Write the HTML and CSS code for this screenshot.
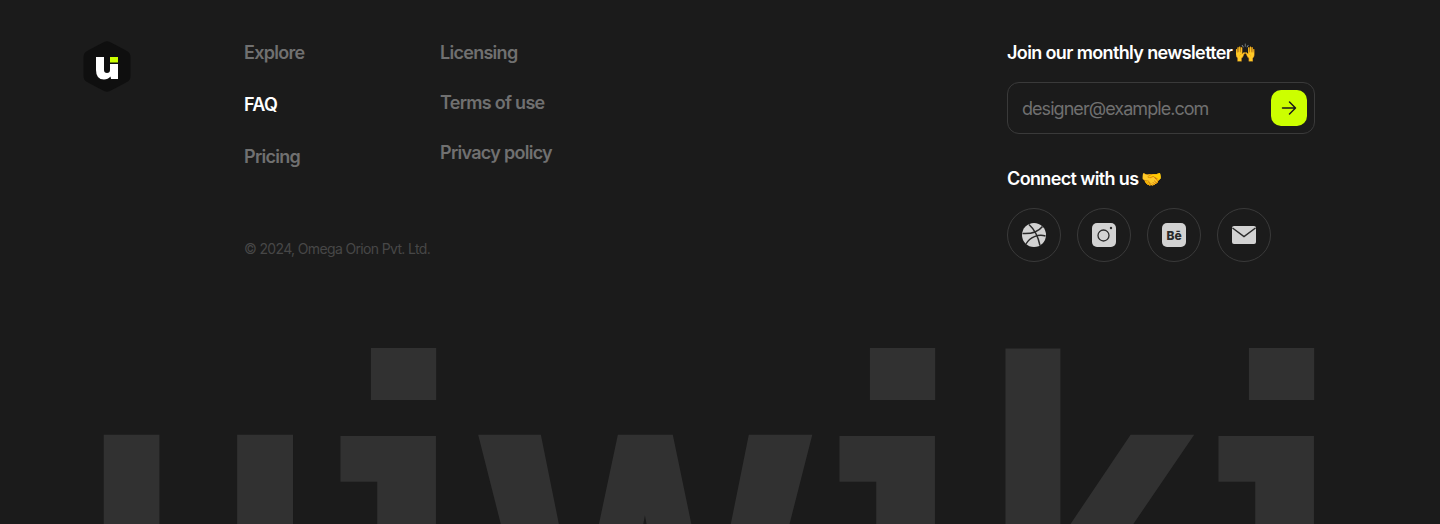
FILE: index.html
```html
<!DOCTYPE html>
<html lang="en">
<head>
<meta charset="utf-8">
<title>uiwiki footer</title>
<link rel="stylesheet" href="styles.css">
</head>
<body>
<footer class="footer">
  <div class="top">
    <a class="logo" href="#" aria-label="uiwiki home">
      <svg width="48" height="53" viewBox="0 0 48 53">
        <path d="M21 2 Q24 0.500 27 2 L44 11 Q47.500 13 47.500 17 L47.500 36 Q47.500 40 44 42 L27 51 Q24 52.500 21 51 L4 42 Q0.500 40 0.500 36 L0.500 17 Q0.500 13 4 11 Z" fill="#0f0f0f"/>
        <path d="M13 17 H21 V30 Q21 33 24 33 Q27 33 27 30 V24 H35 V39 H28 L27.500 36.500 Q25 39.500 21 39.500 Q13 39.500 13 30 Z" fill="#fff"/>
        <rect x="27" y="17" width="8" height="5.500" fill="#ccff00"/>
      </svg>
    </a>
    <div class="nav">
      <div class="links">
        <nav class="col col-a">
          <a href="#">Explore</a>
          <a href="#" class="active">FAQ</a>
          <a href="#">Pricing</a>
        </nav>
        <nav class="col col-b">
          <a href="#">Licensing</a>
          <a href="#">Terms of use</a>
          <a href="#">Privacy policy</a>
        </nav>
      </div>
      <p class="copy">© 2024, Omega Orion Pvt. Ltd.</p>
    </div>
    <div class="side">
      <h3 class="side-title">Join our monthly newsletter <span class="emoji">🙌</span></h3>
      <form class="sub">
        <input class="sub-input" type="email" placeholder="designer@example.com">
        <button class="sub-btn" type="button" aria-label="Subscribe">
          <svg width="16" height="16" viewBox="0 0 16 16" fill="none" stroke="#1a1a1a" stroke-width="1.500" stroke-linecap="round" stroke-linejoin="round"><path d="M1.500 8 H14 M8.500 2 L14.500 8 L8.500 14"/></svg>
        </button>
      </form>
      <h3 class="side-title connect">Connect with us <span class="emoji emoji-small">🤝</span></h3>
      <div class="socials">
        <a class="social" href="#" aria-label="Dribbble">
          <svg width="24" height="24" viewBox="0 0 24 24"><circle cx="12" cy="12" r="12" fill="#d2d2d2"/><g fill="none" stroke="#2a2a2a" stroke-width="1.500"><path d="M7 1.500 C12 6 16 13 18 22.500"/><path d="M0.500 10.500 C8 11 16 9 20.500 3.500"/><path d="M23.500 13 C16 11 8 14 4 21"/></g></svg>
        </a>
        <a class="social" href="#" aria-label="Instagram">
          <svg width="24" height="24" viewBox="0 0 24 24"><rect width="24" height="24" rx="5" fill="#d2d2d2"/><circle cx="11.500" cy="12.500" r="5.500" fill="none" stroke="#2a2a2a" stroke-width="1.300"/><circle cx="19" cy="5" r="1.200" fill="#2a2a2a"/></svg>
        </a>
        <a class="social" href="#" aria-label="Behance">
          <span class="be">Bē</span>
        </a>
        <a class="social" href="#" aria-label="Email">
          <svg width="24" height="18" viewBox="0 0 24 18"><rect width="24" height="18" rx="2" fill="#d2d2d2"/><path d="M0.500 2 L12 10.500 L23.500 2" fill="none" stroke="#2a2a2a" stroke-width="1.500"/></svg>
        </a>
      </div>
    </div>
  </div>
  <div class="mark"><span class="g g-u">u</span><span class="g-i s-a">i</span><span class="g g-w">w</span><span class="g-i s-b">i</span><span class="g g-k">k</span><span class="g-i">i</span></div>
</footer>
</body>
</html>
```
FILE: styles.css
```css
* { box-sizing: border-box; }
html, body { margin: 0; height: 524px; overflow: hidden; background: #1b1b1b; }
body { font-family: Inter, "Noto Sans", sans-serif; color: #fff; }
a { color: inherit; text-decoration: none; }
.footer { height: 524px; overflow: hidden; padding: 40px 125px 0 83px; }
.top { display: flex; height: 244px; }
.logo { width: 161px; height: 53px; flex: none; display: block; }
.nav { flex: 1; padding-top: 1px; }
.links { display: flex; height: 171px; }
.col { display: flex; flex-direction: column; font-size: 18px; line-height: 24px; font-weight: 600; color: #707070; letter-spacing: -0.72px; }
.col-a { width: 196px; gap: 28px; }
.col-b { gap: 26px; }
.active { color: #fff; }
.copy { margin: 28px 0 0; font-size: 14px; line-height: 18px; color: #474747; letter-spacing: -0.65px; }
.side { width: 308px; flex: none; padding-top: 1px; }
.side-title { margin: 0; font-size: 18px; line-height: 24px; font-weight: 600; letter-spacing: -0.63px; }
.emoji { margin-left: -2px; }
.emoji-small { margin-left: -1px; font-size: 17px; }
.sub { margin-top: 17px; height: 52px; border: 1px solid #3a3a3a; border-radius: 12px; display: flex; align-items: center; padding: 0 7px 0 14px; }
.sub-input { flex: 1; min-width: 0; background: none; border: 0; outline: 0; padding: 0; font: 400 18px Inter, sans-serif; letter-spacing: -0.95px; color: #fff; }
.sub-input::placeholder { color: #707070; opacity: 1; }
.sub-btn { width: 36px; height: 36px; border: 0; border-radius: 10px; background: #ccff00; display: flex; align-items: center; justify-content: center; padding: 0; }
.connect { margin-top: 33px; }
.socials { display: flex; gap: 16px; margin-top: 17px; }
.social { width: 54px; height: 54px; border: 1px solid #3a3a3a; border-radius: 50%; display: flex; align-items: center; justify-content: center; }
.be { width: 24px; height: 24px; border-radius: 5px; background: #d2d2d2; color: #2a2a2a; font-size: 12px; font-weight: 800; display: flex; align-items: center; justify-content: center; }
.mark { display: flex; margin-left: -3px; color: #313131; white-space: nowrap; line-height: 1; font-weight: 700; }
.g { display: block; font-size: 475px; transform-origin: 0 0; }
.g-u { width: 190px; transform: scaleX(0.8); }
.g-w { width: 297px; transform: scaleX(0.858); }
.g-k { width: 166px; transform: scaleX(0.79); }
.g-i { position: relative; display: block; width: 202px; margin-top: 35px; font-family: "Liberation Mono", monospace; font-size: 492px; transform-origin: 0 0; transform: scaleX(0.87); clip-path: inset(29px 0 0 81px); }
.s-b { width: 213px; }
.g-i::after { content: ""; position: absolute; left: 116px; top: 29px; width: 75px; height: 52px; background: #313131; }
```
